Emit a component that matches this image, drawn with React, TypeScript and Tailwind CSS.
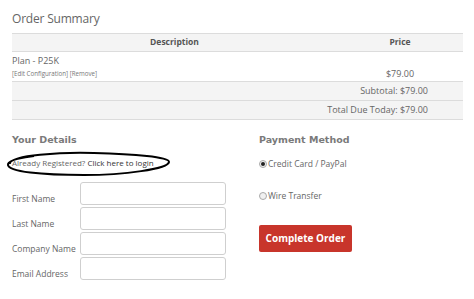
import React from "react";

function Radio({ checked }: { checked?: boolean }) {
  return (
    <span className="w-[8px] h-[8px] rounded-full border border-[#a9a9a9] bg-[#f1f1f1] flex items-center justify-center shrink-0">
      {checked ? <span className="w-[4px] h-[4px] rounded-full bg-[#222]" /> : null}
    </span>
  );
}

function Field({ label }: { label: string }) {
  return (
    <div className="flex h-[23px] mb-[2px]">
      <div className="w-[68px] pt-[12px] text-[8.5px] leading-[10px] text-[#666]">{label}</div>
      <div className="w-[146px] h-[23px] border border-[#cfcfcf] rounded-[3px] bg-white" />
    </div>
  );
}

export default function App() {
  return (
    <div className="w-[474px] h-[299px] overflow-hidden bg-white px-[12px] font-['Open_Sans',sans-serif] text-[#666]">
      <h1 className="pt-[11px] text-[12px] leading-[16px] text-[#666] tracking-[-0.2px]">Order Summary</h1>

      <div className="mt-[6px] w-[451px] text-[8.5px]">
        <div className="flex h-[19px] items-center border-y border-[#dcdcdc] bg-[#f4f4f4] font-bold text-[#555]">
          <div className="w-[325px] text-center">Description</div>
          <div className="flex-1 text-center">Price</div>
        </div>
        <div className="flex h-[30px] border-b border-[#dcdcdc]">
          <div className="w-[325px] pt-[3px]">
            <div className="text-[9px] leading-[12px] text-[#666]">Plan - P25K</div>
            <div className="mt-[3px] text-[6.2px] leading-[8px] text-[#777]">[Edit Configuration] [Remove]</div>
          </div>
          <div className="flex-1 pt-[16px] text-center text-[9px] leading-[12px]">$79.00</div>
        </div>
        <div className="flex h-[19px] items-center justify-end border-b border-[#dcdcdc] bg-[#f4f4f4] pr-[35px] text-[9px]">
          Subtotal: $79.00
        </div>
        <div className="flex h-[19px] items-center justify-end border-b border-[#dcdcdc] bg-[#f4f4f4] pr-[35px] text-[9px]">
          Total Due Today: $79.00
        </div>
      </div>

      <div className="flex">
        <div className="w-[247px]">
          <h2 className="mt-[13px] font-['DejaVu_Sans',sans-serif] text-[9.5px] leading-[14px] font-bold text-[#7a7a7a]">Your Details</h2>
          <div className="relative mt-[9px] h-[14px] text-[8px] leading-[14px] whitespace-nowrap">
            <span className="text-[#666]">Already Registered? </span>
            <span className="text-[#333]">Click here to login</span>
            <svg className="absolute left-[-8px] top-[-6px]" width="170" height="28" viewBox="0 0 170 28">
              <path
                d="M6 14 C 4 5, 60 2, 90 3 C 130 4, 166 7, 165 12 C 164 19, 120 25, 80 25 C 40 25, 2 22, 4 14 C 5 10, 20 7, 30 6"
                fill="none"
                stroke="#000"
                strokeWidth="2"
              />
            </svg>
          </div>
          <div className="mt-[12px]">
            <Field label="First Name" />
            <Field label="Last Name" />
            <Field label="Company Name" />
            <Field label="Email Address" />
          </div>
        </div>

        <div className="flex-1">
          <h2 className="mt-[13px] font-['DejaVu_Sans',sans-serif] text-[9.5px] leading-[14px] font-bold text-[#7a7a7a]">Payment Method</h2>
          <label className="mt-[10px] flex items-center h-[14px] text-[8.5px] text-[#666]">
            <Radio checked />
            <span className="ml-[1px]">Credit Card / PayPal</span>
          </label>
          <label className="mt-[18px] flex items-center h-[14px] text-[8.5px] text-[#666]">
            <Radio />
            <span className="ml-[1px]">Wire Transfer</span>
          </label>
          <button className="mt-[22px] h-[27px] w-[93px] rounded-[2px] bg-[#c8352b] text-[10px] font-bold text-white">
            Complete Order
          </button>
        </div>
      </div>
    </div>
  );
}
